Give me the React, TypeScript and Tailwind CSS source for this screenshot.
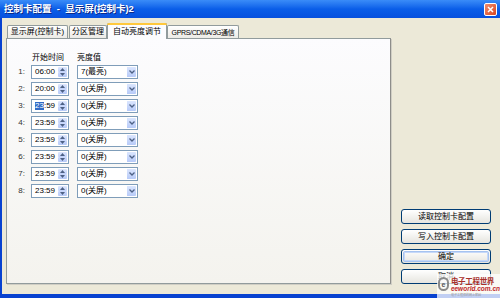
import React from 'react';

const font = { fontFamily: '"Liberation Sans", "Noto Sans CJK SC", sans-serif' };

const rows = [
  { n: 1, time: '06:00', level: '7(最亮)' },
  { n: 2, time: '20:00', level: '0(关屏)' },
  { n: 3, time: '23:59', level: '0(关屏)', sel: true },
  { n: 4, time: '23:59', level: '0(关屏)' },
  { n: 5, time: '23:59', level: '0(关屏)' },
  { n: 6, time: '23:59', level: '0(关屏)' },
  { n: 7, time: '23:59', level: '0(关屏)' },
  { n: 8, time: '23:59', level: '0(关屏)' },
];

function Spinner() {
  return (
    <div className="flex flex-col w-[10px] h-full border-l border-white">
      <div className="flex-1 flex items-center justify-center bg-gradient-to-b from-[#dfe8fe] to-[#c0d1f9] rounded-[1px]">
        <svg width="5" height="3" viewBox="0 0 5 3"><path d="M0 3 L2.5 0 L5 3 Z" fill="#4d6185" /></svg>
      </div>
      <div className="flex-1 flex items-center justify-center bg-gradient-to-b from-[#cbd9fc] to-[#b6c9f7] rounded-[1px]">
        <svg width="5" height="3" viewBox="0 0 5 3"><path d="M0 0 L2.5 3 L5 0 Z" fill="#4d6185" /></svg>
      </div>
    </div>
  );
}

function DropButton() {
  return (
    <div className="flex items-center justify-center w-[10px] h-full bg-gradient-to-b from-[#dbe6fe] to-[#b7caf8] border-l border-white rounded-[1px]">
      <svg width="6" height="4" viewBox="0 0 6 4"><path d="M0.5 0.5 L3 3 L5.5 0.5" stroke="#4d6185" strokeWidth="1.3" fill="none" /></svg>
    </div>
  );
}

function Tab({ label, w, active, text = 'text-[8px]' }: { label: string; w: string; active?: boolean; text?: string }) {
  if (active) {
    return (
      <div className={`${w} h-[16px] -mb-px -mx-px z-10 relative flex flex-col bg-[#fcfcfe] border border-b-0 border-[#919b9c] rounded-t-[2px]`}>
        <div className="h-[2px] bg-[#ffc83c] -mx-px -mt-px rounded-t-[2px]" />
        <div className={`flex-1 flex items-center justify-center ${text} text-black leading-none whitespace-nowrap`}>{label}</div>
      </div>
    );
  }
  return (
    <div className={`${w} h-[13px] flex items-center justify-center bg-gradient-to-b from-white to-[#ecebe6] border border-b-0 border-[#919b9c] rounded-t-[2px] ${text} text-black leading-none whitespace-nowrap`}>
      {label}
    </div>
  );
}

function Button({ label, primary }: { label: string; primary?: boolean }) {
  return (
    <div className="h-[15px] w-[90px] rounded-[3px] border border-[#003c74] bg-gradient-to-b from-white to-[#e6e5df] p-px">
      <div className={`h-full flex items-center justify-center rounded-[2px] text-[8px] text-black leading-none ${primary ? 'border border-[#a6c3f0] shadow-[inset_0_0_0_1px_#c6d8f8]' : ''}`}>
        {label}
      </div>
    </div>
  );
}

export default function App() {
  return (
    <div className="w-[500px] h-[298px] flex flex-col bg-[#0842d0] overflow-hidden" style={font}>
      <div className="h-[18px] flex items-center justify-between pl-[4px] pr-[3px] bg-gradient-to-b from-[#3a8cf8] via-[#0a5ee8] to-[#0750de]">
        <span className="text-white font-bold text-[9.5px] leading-none whitespace-pre [text-shadow:1px_1px_0_#0a2a8a]">控制卡配置  -  显示屏(控制卡)2</span>
        <div className="w-[13px] h-[13px] rounded-[2px] border border-white bg-gradient-to-br from-[#f08c6c] to-[#d8441c] flex items-center justify-center">
          <svg width="7" height="7" viewBox="0 0 7 7"><path d="M1 1 L6 6 M6 1 L1 6" stroke="white" strokeWidth="1.5" /></svg>
        </div>
      </div>

      <div className="flex-1 ml-[2px] mb-[4px] bg-[#ece9d8] flex pl-[4px] pt-[4px] pb-[10px] relative">
        <div className="w-[385px] flex flex-col">
          <div className="flex items-end gap-px pl-px h-[16px]">
            <Tab label="显示屏(控制卡)" w="w-[61px]" />
            <Tab label="分区管理" w="w-[38px]" />
            <Tab label="自动亮度调节" w="w-[60px]" active />
            <Tab label="GPRS/CDMA/3G通信" w="w-[72px]" text="text-[7px] tracking-[-0.35px] text-[#333]" />
          </div>
          <div className="flex-1 border border-[#919b9c] border-r-[#8d8d8a] bg-gradient-to-b from-[#fcfcfe] to-[#f4f3ee] shadow-[1px_1px_0_#d0cec4] pt-[14px] pl-[10px]">
            <div className="flex h-[10px] items-center text-[8px] leading-none text-black mb-[2px]">
              <span className="w-[15px]" />
              <span className="w-[45px]">开始时间</span>
              <span>亮度值</span>
            </div>
            <div className="flex flex-col gap-[3px]">
              {rows.map((r) => (
                <div key={r.n} className="flex items-center h-[14px] text-[8px] leading-none text-black">
                  <span className="w-[8px] text-right text-[#333]">{r.n}:</span>
                  <div className="ml-[6px] w-[38px] h-full flex border border-[#7f9db9] bg-white p-px">
                    <div className="flex-1 flex items-center pl-[2px]">
                      {r.sel ? (
                        <><span className="bg-[#316ac5] text-white">23</span><span>:59</span></>
                      ) : (
                        r.time
                      )}
                    </div>
                    <Spinner />
                  </div>
                  <div className="ml-[8px] w-[61px] h-full flex border border-[#7f9db9] bg-white p-px">
                    <div className="flex-1 flex items-center pl-[2px]">{r.level}</div>
                    <DropButton />
                  </div>
                </div>
              ))}
            </div>
          </div>
        </div>

        <div className="flex-1 flex flex-col justify-end items-start pl-[10px] gap-[5px]">
          <Button label="读取控制卡配置" />
          <Button label="写入控制卡配置" />
          <Button label="确定" primary />
          <Button label="取消" />
        </div>

        <div className="absolute right-0 bottom-[-4px] w-[63px] h-[24px] bg-white/75 flex items-start gap-[2px] pl-[1px] pt-[2px]">
          <div className="w-[14px] h-[14px] mt-[1px] rounded-full border-[2px] border-[#8a8a8a] flex items-center justify-center text-[7px] font-bold text-[#555] leading-none">e</div>
          <div className="flex flex-col leading-none">
            <span className="text-[7.5px] leading-[9px] text-[#a8302a] font-bold tracking-[-0.3px]" style={{ fontFamily: '"Noto Sans CJK SC", serif' }}>电子工程世界</span>
            <span className="text-[6.5px] leading-[8px] italic text-[#c0282a] font-bold">eeworld.com.cn</span>
            <span className="text-[3px] leading-[4px] text-[#999]">电子工程师的网上家园</span>
          </div>
        </div>
      </div>
    </div>
  );
}
